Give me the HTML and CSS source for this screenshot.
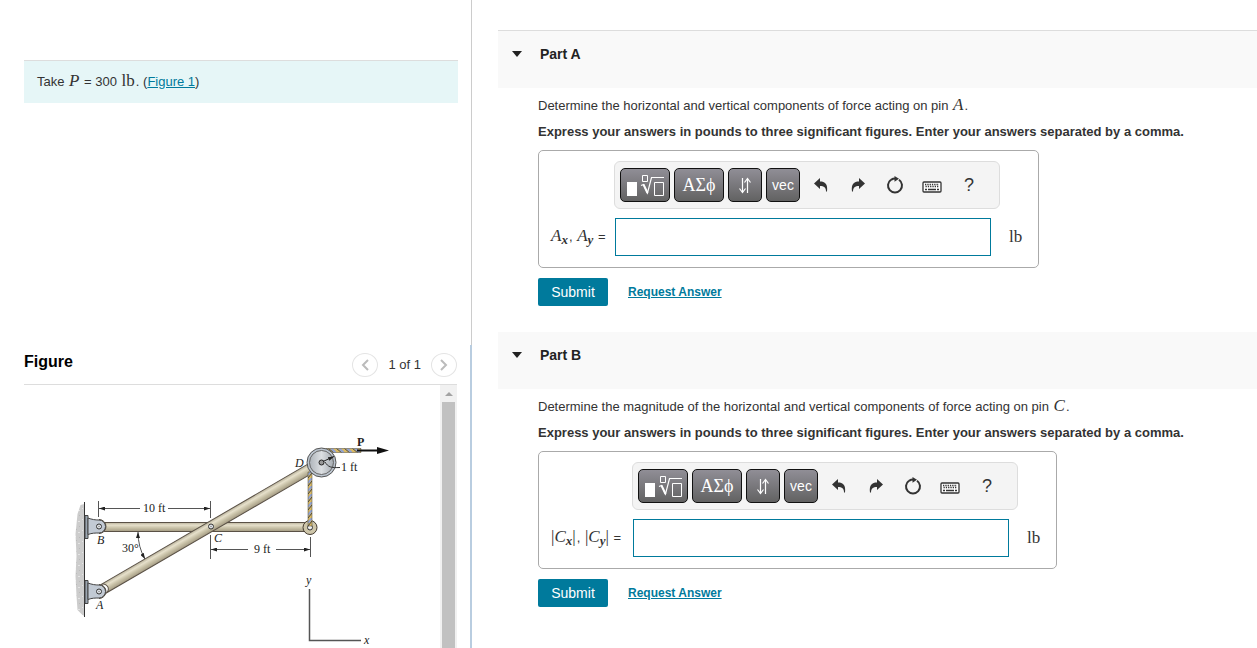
FILE: index.html
```html
<!DOCTYPE html>
<html lang="en">
    <head>
        <meta charset="UTF-8" />
        <title>Problem</title>
        <meta name="viewport" content="width=device-width, initial-scale=1" />
        <link rel="stylesheet" href="styles.css">
    </head>
    <body>
        <!-- shared toolbar icons -->
        <svg class="sprite" aria-hidden="true">
            <symbol id="icon-root" viewBox="0 0 40 24">
                <path d="M2 9h10v14H2z" fill="#fff" />
                <path d="M17.5 2.5h5v6h-5z M29.500 9.500h9v13h-9z" fill="none" stroke="#fff" />
                <path d="M16 12.500l2.500-1 4 8.500 4-15.500H39" fill="none" stroke="#fff" stroke-width="1.200" />
                <path d="M18.500 11.500l4 8.500" stroke="#fff" stroke-width="2" />
            </symbol>
            <symbol id="icon-arrows" viewBox="0 0 14 18">
                <path d="M4.500 2v14M9.500 17V3" stroke="#fff" stroke-width="1.200" />
                <path d="M1.500 12.500l3 4 3-4M6.500 6.500l3-4 3 4" fill="none" stroke="#fff" stroke-width="1.200" />
            </symbol>
            <symbol id="icon-undo" viewBox="0 0 16 16">
                <path d="M1 6.500L7 1v3.500c5 0 8 2.500 7 10h-1c0-4-2-5.500-6-5.500v3z" fill="#333" />
            </symbol>
            <symbol id="icon-reset" viewBox="0 0 18 18">
                <path d="M5 3.800a7 7 0 1 0 8 0" fill="none" stroke="#333" stroke-width="2" />
                <path d="M5 3.800Q7 2.500 10 2.600" fill="none" stroke="#333" stroke-width="2" />
                <path d="M8.500 0l4.500 2.800-4.500 3z" fill="#333" />
            </symbol>
            <symbol id="icon-keyboard" viewBox="0 0 20 12">
                <rect x="1" y="1" width="18" height="10" rx="1" fill="#fff" stroke="#333" stroke-width="1.300" />
                <path d="M3 3.500h14M3.500 5.500h13" stroke="#333" stroke-width="1.300" stroke-dasharray="1.300 1" />
                <path d="M3 8.500h2M6 8.500h8M15 8.500h2" stroke="#333" stroke-width="1.300" />
            </symbol>
        </svg>

        <div class="page">
            <aside class="side">
                <section class="intro">
                    <p class="given">Take <i class="math">P</i> = 300 <span class="math">lb</span>. (<a href="#figure">Figure 1</a>)</p>
                </section>

                <section class="figure" id="figure">
                    <header class="figure-head">
                        <h2>Figure</h2>
                        <div class="pager">
                            <button type="button" aria-label="Previous figure">
                                <svg width="8" height="12" viewBox="0 0 8 12"><path d="M7 1L2 6l5 5" /></svg>
                            </button>
                            <span>1 of 1</span>
                            <button type="button" aria-label="Next figure">
                                <svg width="8" height="12" viewBox="0 0 8 12"><path d="M1 1l5 5-5 5" /></svg>
                            </button>
                        </div>
                    </header>
                    <div class="figure-body">
                        <svg class="drawing" width="416" height="263" viewBox="24 385 416 263">
                            <defs>
                                <linearGradient id="bar" x1="0" y1="0" x2="0" y2="1">
                                    <stop offset="0" stop-color="#b9b29b" />
                                    <stop offset=".3" stop-color="#e6e0cb" />
                                    <stop offset=".6" stop-color="#c9c2a8" />
                                    <stop offset="1" stop-color="#a39a82" />
                                </linearGradient>
                                <linearGradient id="disc">
                                    <stop offset="0" stop-color="#aeb4ba" />
                                    <stop offset=".5" stop-color="#dcdfe2" />
                                    <stop offset="1" stop-color="#a5abb1" />
                                </linearGradient>
                                <pattern id="rope-v" x="308" y="470" width="4" height="8" patternUnits="userSpaceOnUse">
                                    <path d="M0 0h4v8H0z" fill="#d9b964" />
                                    <path d="M0 8l4-5" stroke="#444" />
                                    <path d="M0 5l4-5" stroke="#8ea2d6" stroke-width="2" />
                                </pattern>
                                <pattern id="rope-h" x="328" y="448" width="8" height="5" patternUnits="userSpaceOnUse">
                                    <path d="M0 0h8v5H0z" fill="#d9b964" />
                                    <path d="M0 0l6 5" stroke="#444" />
                                    <path d="M3 0l5 5" stroke="#8ea2d6" stroke-width="2" />
                                </pattern>
                                <pattern id="speckle" width="9" height="11" patternUnits="userSpaceOnUse">
                                    <path d="M0 0h9v11H0z" fill="#ccc" />
                                    <path d="M1 2h1v1H1zM6 4h2v1H6zM3 8h1v1H3z" fill="#e4e4e4" />
                                    <path d="M4 1h1v1H4zM7 9h1v1H7z" fill="#bbb" />
                                </pattern>
                                <marker id="tip" viewBox="0 0 6 4" refX="6" refY="2" markerWidth="6" markerHeight="4" markerUnits="userSpaceOnUse" orient="auto-start-reverse">
                                    <path d="M0 0l6 2-6 2z" fill="#222" />
                                </marker>
                                <g id="support">
                                    <path d="M-14-11h3v23h-3z" fill="#9aa5b0" stroke="#444" />
                                    <path d="M-11-8.500C-7-7-4-6.500 0-6.500a6.500 6.500 0 0 1 0 13C-4 6.500-7 6.500-11 8z" fill="#c2cad4" stroke="#444" />
                                </g>
                                <g id="pin">
                                    <circle r="2.500" fill="#e4e8ec" stroke="#333" />
                                    <circle r=".8" fill="#888" />
                                </g>
                            </defs>

                            <!-- wall -->
                            <path d="M84.500 504l-4 1-3 9-2 20 1 22-1 20 1 20 1 14 5 5 2 1z" fill="url(#speckle)" />
                            <path d="M84.500 502v115" stroke="#333" />

                            <!-- members -->
                            <rect x="102" y="522.500" width="208" height="9" fill="url(#bar)" stroke="#5a5146" />
                            <g transform="translate(99 591.500) rotate(-30.200)">
                                <path d="M5-5h243V5H5a5 5 0 0 0 0-10z" fill="url(#bar)" stroke="#5a5146" />
                            </g>
                            <path d="M99 519.500a7 7 0 0 1 0 14M99 584.500a7 7 0 0 1 0 14" fill="#d8d0b8" stroke="#5a5146" />
                            <use href="#support" x="99" y="526.500" />
                            <use href="#support" x="99" y="591.500" />
                            <use href="#pin" x="99" y="526.500" />
                            <use href="#pin" x="99" y="591.500" />
                            <use href="#pin" x="211" y="526.500" />

                            <!-- rope and pulley -->
                            <circle cx="310" cy="527.500" r="7" fill="#cec6aa" stroke="#443b30" />
                            <circle cx="310" cy="527.500" r="2.500" fill="#eee" stroke="#333" />
                            <path d="M308 472h4v54h-4z" fill="url(#rope-v)" stroke="#4b4435" stroke-width=".5" />
                            <path d="M326 448.500h35v4h-35z" fill="url(#rope-h)" stroke="#4b4435" stroke-width=".5" />
                            <circle cx="321.500" cy="462.500" r="14.500" fill="#bcc5cf" stroke="#555" />
                            <circle cx="321.500" cy="462.500" r="12" fill="url(#disc)" stroke="#666" />
                            <circle cx="321.500" cy="462.500" r="2.500" fill="#999" stroke="#222" />
                            <path d="M323 461.500L334 456.500" stroke="#222" marker-end="url(#tip)" />
                            <path d="M325 462c3 5 6 6 15 5.500" fill="none" stroke="#333" />
                            <path d="M357 450.500h22" stroke="#111" stroke-width="2" />
                            <path d="M377 447l12 3.500-12 3.500z" fill="#111" />

                            <!-- dimensions -->
                            <g fill="none" stroke="#555">
                                <path d="M98.500 501v16M210.500 501v17M210.500 535v24M310.500 537v20" />
                                <path d="M140 508.500H99" marker-end="url(#tip)" />
                                <path d="M168 508.500h42" marker-end="url(#tip)" />
                                <path d="M248 549.500h-37" marker-end="url(#tip)" />
                                <path d="M276 549.500h34" marker-end="url(#tip)" />
                                <path d="M138 532Q138 547 145 559" marker-start="url(#tip)" marker-end="url(#tip)" />
                                <path d="M309.500 589v51.500H361" stroke-width="1.500" />
                            </g>

                            <g class="labels">
                                <text x="143" y="512">10 ft</text>
                                <text x="254" y="553">9 ft</text>
                                <text x="341" y="471">1 ft</text>
                                <text x="122" y="552">30°</text>
                                <text x="357" y="446" class="vector">P</text>
                                <g class="points">
                                    <text x="97" y="544">B</text>
                                    <text x="96" y="609">A</text>
                                    <text x="214" y="542">C</text>
                                    <text x="295" y="467">D</text>
                                    <text x="306" y="584">y</text>
                                    <text x="364" y="644">x</text>
                                </g>
                            </g>
                        </svg>
                        <div class="scroll" aria-hidden="true">
                            <span class="scroll-up"></span>
                            <span class="scroll-thumb"></span>
                        </div>
                    </div>
                </section>
            </aside>

            <main class="parts">
                <section class="part">
                    <header class="part-head first">
                        <span class="caret"></span>
                        <h2>Part A</h2>
                    </header>
                    <form class="part-body">
                        <p>Determine the horizontal and vertical components of force acting on pin <i class="math">A</i>.</p>
                        <p class="instructions">Express your answers in pounds to three significant figures. Enter your answers separated by a comma.</p>
                        <div class="answer">
                            <div class="toolbar">
                                <button type="button" class="key wide" aria-label="Templates"><svg width="40" height="24"><use href="#icon-root" /></svg></button>
                                <button type="button" class="key wide greek">ΑΣϕ</button>
                                <button type="button" class="key" aria-label="Arrows"><svg width="14" height="18"><use href="#icon-arrows" /></svg></button>
                                <button type="button" class="key">vec</button>
                                <div class="tools">
                                    <button type="button" aria-label="Undo"><svg width="16" height="16"><use href="#icon-undo" /></svg></button>
                                    <button type="button" aria-label="Redo"><svg class="flip" width="16" height="16"><use href="#icon-undo" /></svg></button>
                                    <button type="button" aria-label="Reset"><svg width="18" height="18"><use href="#icon-reset" /></svg></button>
                                    <button type="button" aria-label="Keyboard"><svg class="keyboard" width="20" height="12"><use href="#icon-keyboard" /></svg></button>
                                    <button type="button">?</button>
                                </div>
                            </div>
                            <label class="quantity" for="answer-a"><i class="math">A<sub>x</sub></i>, <i class="math">A<sub>y</sub></i> =</label>
                            <input id="answer-a" type="text" />
                            <span class="math unit">lb</span>
                        </div>
                        <div class="actions">
                            <button type="submit" class="submit">Submit</button>
                            <a href="#">Request Answer</a>
                        </div>
                    </form>
                </section>

                <section class="part">
                    <header class="part-head">
                        <span class="caret"></span>
                        <h2>Part B</h2>
                    </header>
                    <form class="part-body">
                        <p>Determine the magnitude of the horizontal and vertical components of force acting on pin <i class="math">C</i>.</p>
                        <p class="instructions">Express your answers in pounds to three significant figures. Enter your answers separated by a comma.</p>
                        <div class="answer magnitude">
                            <div class="toolbar">
                                <button type="button" class="key wide" aria-label="Templates"><svg width="40" height="24"><use href="#icon-root" /></svg></button>
                                <button type="button" class="key wide greek">ΑΣϕ</button>
                                <button type="button" class="key" aria-label="Arrows"><svg width="14" height="18"><use href="#icon-arrows" /></svg></button>
                                <button type="button" class="key">vec</button>
                                <div class="tools">
                                    <button type="button" aria-label="Undo"><svg width="16" height="16"><use href="#icon-undo" /></svg></button>
                                    <button type="button" aria-label="Redo"><svg class="flip" width="16" height="16"><use href="#icon-undo" /></svg></button>
                                    <button type="button" aria-label="Reset"><svg width="18" height="18"><use href="#icon-reset" /></svg></button>
                                    <button type="button" aria-label="Keyboard"><svg class="keyboard" width="20" height="12"><use href="#icon-keyboard" /></svg></button>
                                    <button type="button">?</button>
                                </div>
                            </div>
                            <label class="quantity" for="answer-b"><span class="math">|<i>C<sub>x</sub></i>|</span>, <span class="math">|<i>C<sub>y</sub></i>|</span> =</label>
                            <input id="answer-b" type="text" />
                            <span class="math unit">lb</span>
                        </div>
                        <div class="actions">
                            <button type="submit" class="submit">Submit</button>
                            <a href="#">Request Answer</a>
                        </div>
                    </form>
                </section>
            </main>
        </div>
    </body>
</html>
```
FILE: styles.css
```css
* {
    box-sizing: border-box;
}
body {
    margin: 0;
    color: #333;
    background: #fff;
    font-family: "Liberation Sans", Arial, sans-serif;
    font-size: 13px;
    line-height: 20px;
}
h2,
p {
    margin: 0;
}
button {
    padding: 0;
    font-family: inherit;
    cursor: pointer;
}
a {
    color: #007a9c;
}
.sprite {
    display: none;
}
.math {
    padding: 0 1px;
    font-family: "Liberation Serif", "Times New Roman", serif;
    font-size: 17px;
    line-height: 18px;
}
.math sub {
    font-size: 13px;
    font-weight: bold;
    line-height: 0;
    vertical-align: -3px;
}

.page {
    display: flex;
    min-height: 100vh;
}

/* Left side: problem text and figure */
.side {
    display: grid;
    grid-template-rows: 345px 1fr;
    flex: 0 0 472px;
}
.intro {
    padding: 60px 13px 0 24px;
    border-right: 1px solid #ccc;
}
.given {
    padding: 11px 13px;
    border-top: 1px solid #ddd;
    background: #e6f6f7;
}
.figure {
    display: flex;
    flex-direction: column;
    padding: 0 13px 0 24px;
    border-right: 2px solid #b9cde0;
}
.figure-head {
    display: flex;
    align-items: center;
    justify-content: space-between;
    height: 40px;
    border-bottom: 1px solid #ddd;
}
.figure-head h2 {
    padding-bottom: 6px;
    color: #000;
    font-size: 16px;
}
.pager {
    display: flex;
    align-items: center;
    gap: 10px;
}
.pager button {
    display: flex;
    align-items: center;
    justify-content: center;
    width: 26px;
    height: 24px;
    border: 1px solid #e4e4e4;
    border-radius: 50%;
    background: #fff;
}
.pager path {
    fill: none;
    stroke: #bbb;
    stroke-width: 2;
}
.figure-body {
    display: flex;
    flex: 1;
    justify-content: space-between;
}
.labels {
    fill: #222;
    font-family: "Liberation Serif", "Times New Roman", serif;
    font-size: 12px;
}
.points {
    font-style: italic;
}
.vector {
    font-weight: bold;
}
.scroll {
    display: flex;
    flex-direction: column;
    align-items: center;
    width: 17px;
    padding-top: 7px;
    background: #f1f1f1;
}
.scroll-up {
    border: 4px solid transparent;
    border-top: 0;
    border-bottom-color: #a3a3a3;
}
.scroll-thumb {
    flex: 1;
    width: 13px;
    margin-top: 6px;
    background: #c1c1c1;
}

/* Right side: question parts */
.parts {
    flex: 1;
    padding: 30px 0 0 26px;
}
.part-head {
    display: flex;
    align-items: flex-start;
    gap: 18px;
    height: 57px;
    padding: 13px 14px;
    background: #f9f9f9;
}
.part-head.first {
    height: 58px;
    border-top: 1px solid #ddd;
}
.part-head h2 {
    color: #222;
    font-size: 14px;
}
.caret {
    margin-top: 7px;
    border: 5px solid transparent;
    border-top: 6px solid #222;
    border-bottom: 0;
}
.part-body {
    padding: 8px 0 26px 40px;
}
.instructions {
    margin-top: 6px;
    font-weight: bold;
}
.answer {
    display: grid;
    grid-template-columns: 56px 386px auto;
    gap: 9px 8px;
    align-items: center;
    width: max-content;
    margin-top: 8px;
    padding: 10px 15px 11px 11px;
    border: 1px solid #aaa;
    border-radius: 5px;
}
.answer.magnitude {
    grid-template-columns: 74px 386px auto;
}
.toolbar {
    display: flex;
    grid-column: 2;
    gap: 4px;
    align-items: center;
    height: 48px;
    padding: 0 5px;
    border: 1px solid #ddd;
    border-radius: 6px;
    background: #f4f4f4;
}
.toolbar button {
    display: flex;
    align-items: center;
    justify-content: center;
    width: 34px;
    height: 34px;
}
.toolbar .key {
    border: 1px solid #111;
    border-radius: 5px;
    background: linear-gradient(#908e96, #626262);
    color: #fff;
    font-size: 14px;
}
.toolbar .wide {
    width: 50px;
}
.toolbar .greek {
    font-family: "Liberation Serif", "Times New Roman", serif;
    font-size: 18px;
}
.tools {
    display: flex;
    gap: 3px;
}
.tools button {
    border: 0;
    background: none;
    color: #333;
    font-size: 18px;
}
.flip {
    transform: scaleX(-1);
}
.keyboard {
    margin-top: 4px;
}
.quantity {
    grid-column: 1;
    white-space: nowrap;
}
.answer input {
    width: 376px;
    height: 38px;
    margin-left: 1px;
    padding: 0 8px;
    border: 1px solid #007a9c;
    background: #fff;
    font-size: 16px;
}
.actions {
    display: flex;
    align-items: center;
    gap: 20px;
    margin-top: 10px;
}
.submit {
    width: 70px;
    height: 28px;
    border: 0;
    border-radius: 2px;
    background: #007a9c;
    color: #fff;
    font-size: 14px;
}
.actions a {
    font-size: 12px;
    font-weight: bold;
}
```
